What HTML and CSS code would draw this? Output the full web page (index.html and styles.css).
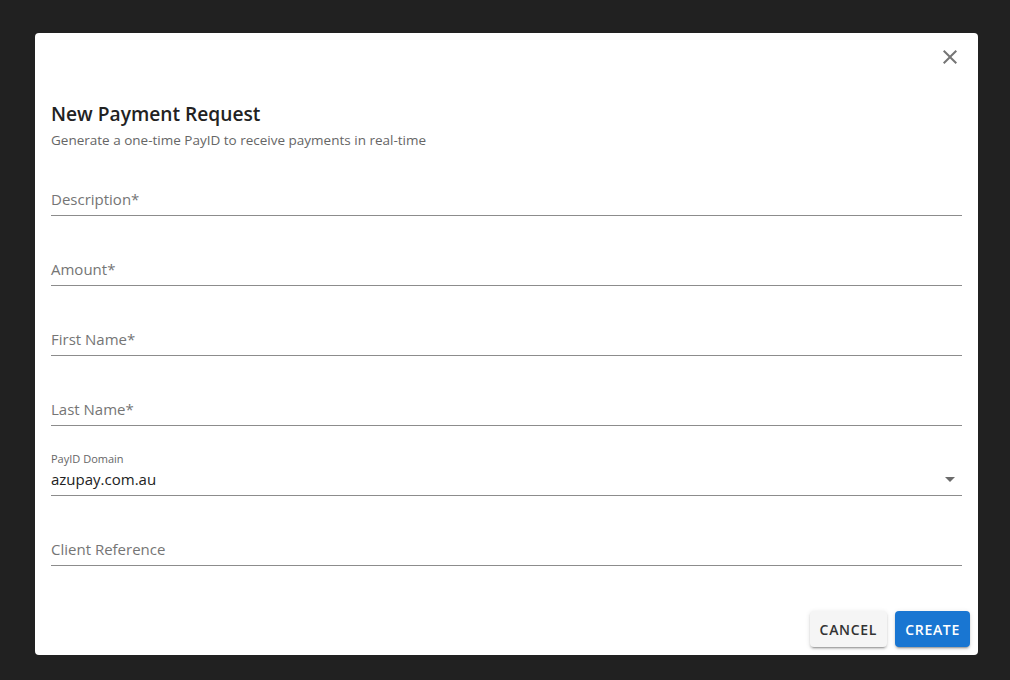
FILE: index.html
```html
<!DOCTYPE html>
<html lang="en">
<head>
<meta charset="utf-8">
<title>New Payment Request</title>
<link rel="stylesheet" href="styles.css">
</head>
<body>
<div class="overlay">
  <div class="dialog" role="dialog" aria-labelledby="dlg-title">
    <div class="dialog-top">
      <button class="close-btn" aria-label="Close">
        <svg width="24" height="24" viewBox="0 0 24 24"><path d="M19 6.41 17.59 5 12 10.59 6.41 5 5 6.41 10.59 12 5 17.59 6.41 19 12 13.41 17.59 19 19 17.59 13.41 12z" fill="#757575"/></svg>
      </button>
    </div>
    <div class="dialog-body">
      <h2 id="dlg-title" class="title">New Payment Request</h2>
      <p class="subtitle">Generate a one-time PayID to receive payments in real-time</p>
      <div class="field"><span class="placeholder">Description*</span></div>
      <div class="field"><span class="placeholder">Amount*</span></div>
      <div class="field"><span class="placeholder">First Name*</span></div>
      <div class="field"><span class="placeholder">Last Name*</span></div>
      <div class="field field-select">
        <span class="small-label">PayID Domain</span>
        <div class="select-row">
          <span class="value">azupay.com.au</span>
          <span class="arrow"></span>
        </div>
      </div>
      <div class="field"><span class="placeholder">Client Reference</span></div>
    </div>
    <div class="actions">
      <button class="btn btn-cancel">Cancel</button>
      <button class="btn btn-create">Create</button>
    </div>
  </div>
</div>
</body>
</html>
```

FILE: styles.css
```css
* { box-sizing: border-box; }
html, body { margin: 0; padding: 0; }
body {
  background: #212121;
  font-family: "Open Sans", "Noto Sans", sans-serif;
  width: 1010px;
  height: 680px;
  overflow: hidden;
}
.overlay {
  padding: 33px 32px 0 35px;
}
.dialog {
  width: 943px;
  height: 622px;
  background: #fff;
  border-radius: 4px;
  display: flex;
  flex-direction: column;
}
.dialog-top {
  display: flex;
  justify-content: flex-end;
  padding: 4px 8px 0 8px;
}
.close-btn {
  width: 40px;
  height: 40px;
  border: 0;
  background: transparent;
  padding: 0;
  display: flex;
  align-items: center;
  justify-content: center;
  cursor: pointer;
}
.dialog-body {
  padding: 0 16px;
  flex: 1;
}
.title {
  margin: 23px 0 0 0;
  font-size: 19.2px;
  line-height: 28px;
  font-weight: 600;
  color: #222;
}
.subtitle {
  margin: 2px 0 0 0;
  font-size: 13.5px;
  line-height: 20px;
  color: #666;
}
.field {
  margin-top: 41px;
  padding-bottom: 4px;
  border-bottom: 1px solid #8c8c8c;
  display: flex;
  flex-direction: column;
}
.subtitle + .field { margin-top: 37px; }
.placeholder {
  font-size: 15px;
  line-height: 24px;
  color: #757575;
}
.field-select { margin-top: 25px; }
.small-label {
  font-size: 11px;
  line-height: 16px;
  color: #666;
}
.select-row {
  display: flex;
  align-items: center;
  justify-content: space-between;
  padding-right: 7px;
}
.value {
  font-size: 15px;
  line-height: 24px;
  color: #222;
}
.arrow {
  width: 0;
  height: 0;
  border-left: 5px solid transparent;
  border-right: 5px solid transparent;
  border-top: 5px solid #6b6b6b;
}
.actions {
  display: flex;
  justify-content: flex-end;
  gap: 8px;
  padding: 8px;
}
.btn {
  height: 36px;
  padding: 0 10px;
  border: 0;
  border-radius: 4px;
  font-family: "Open Sans", "Noto Sans", sans-serif;
  font-size: 14px;
  font-weight: 600;
  letter-spacing: 0.7px;
  text-transform: uppercase;
  cursor: pointer;
}
.btn-cancel {
  background: #f5f5f5;
  color: #333;
  box-shadow: 0 3px 1px -2px rgba(0,0,0,0.2), 0 2px 2px 0 rgba(0,0,0,0.14), 0 1px 5px 0 rgba(0,0,0,0.12);
}
.btn-create {
  background: #1976d2;
  color: #fff;
  box-shadow: 0 3px 1px -2px rgba(0,0,0,0.2), 0 2px 2px 0 rgba(0,0,0,0.14), 0 1px 5px 0 rgba(0,0,0,0.12);
}
```
